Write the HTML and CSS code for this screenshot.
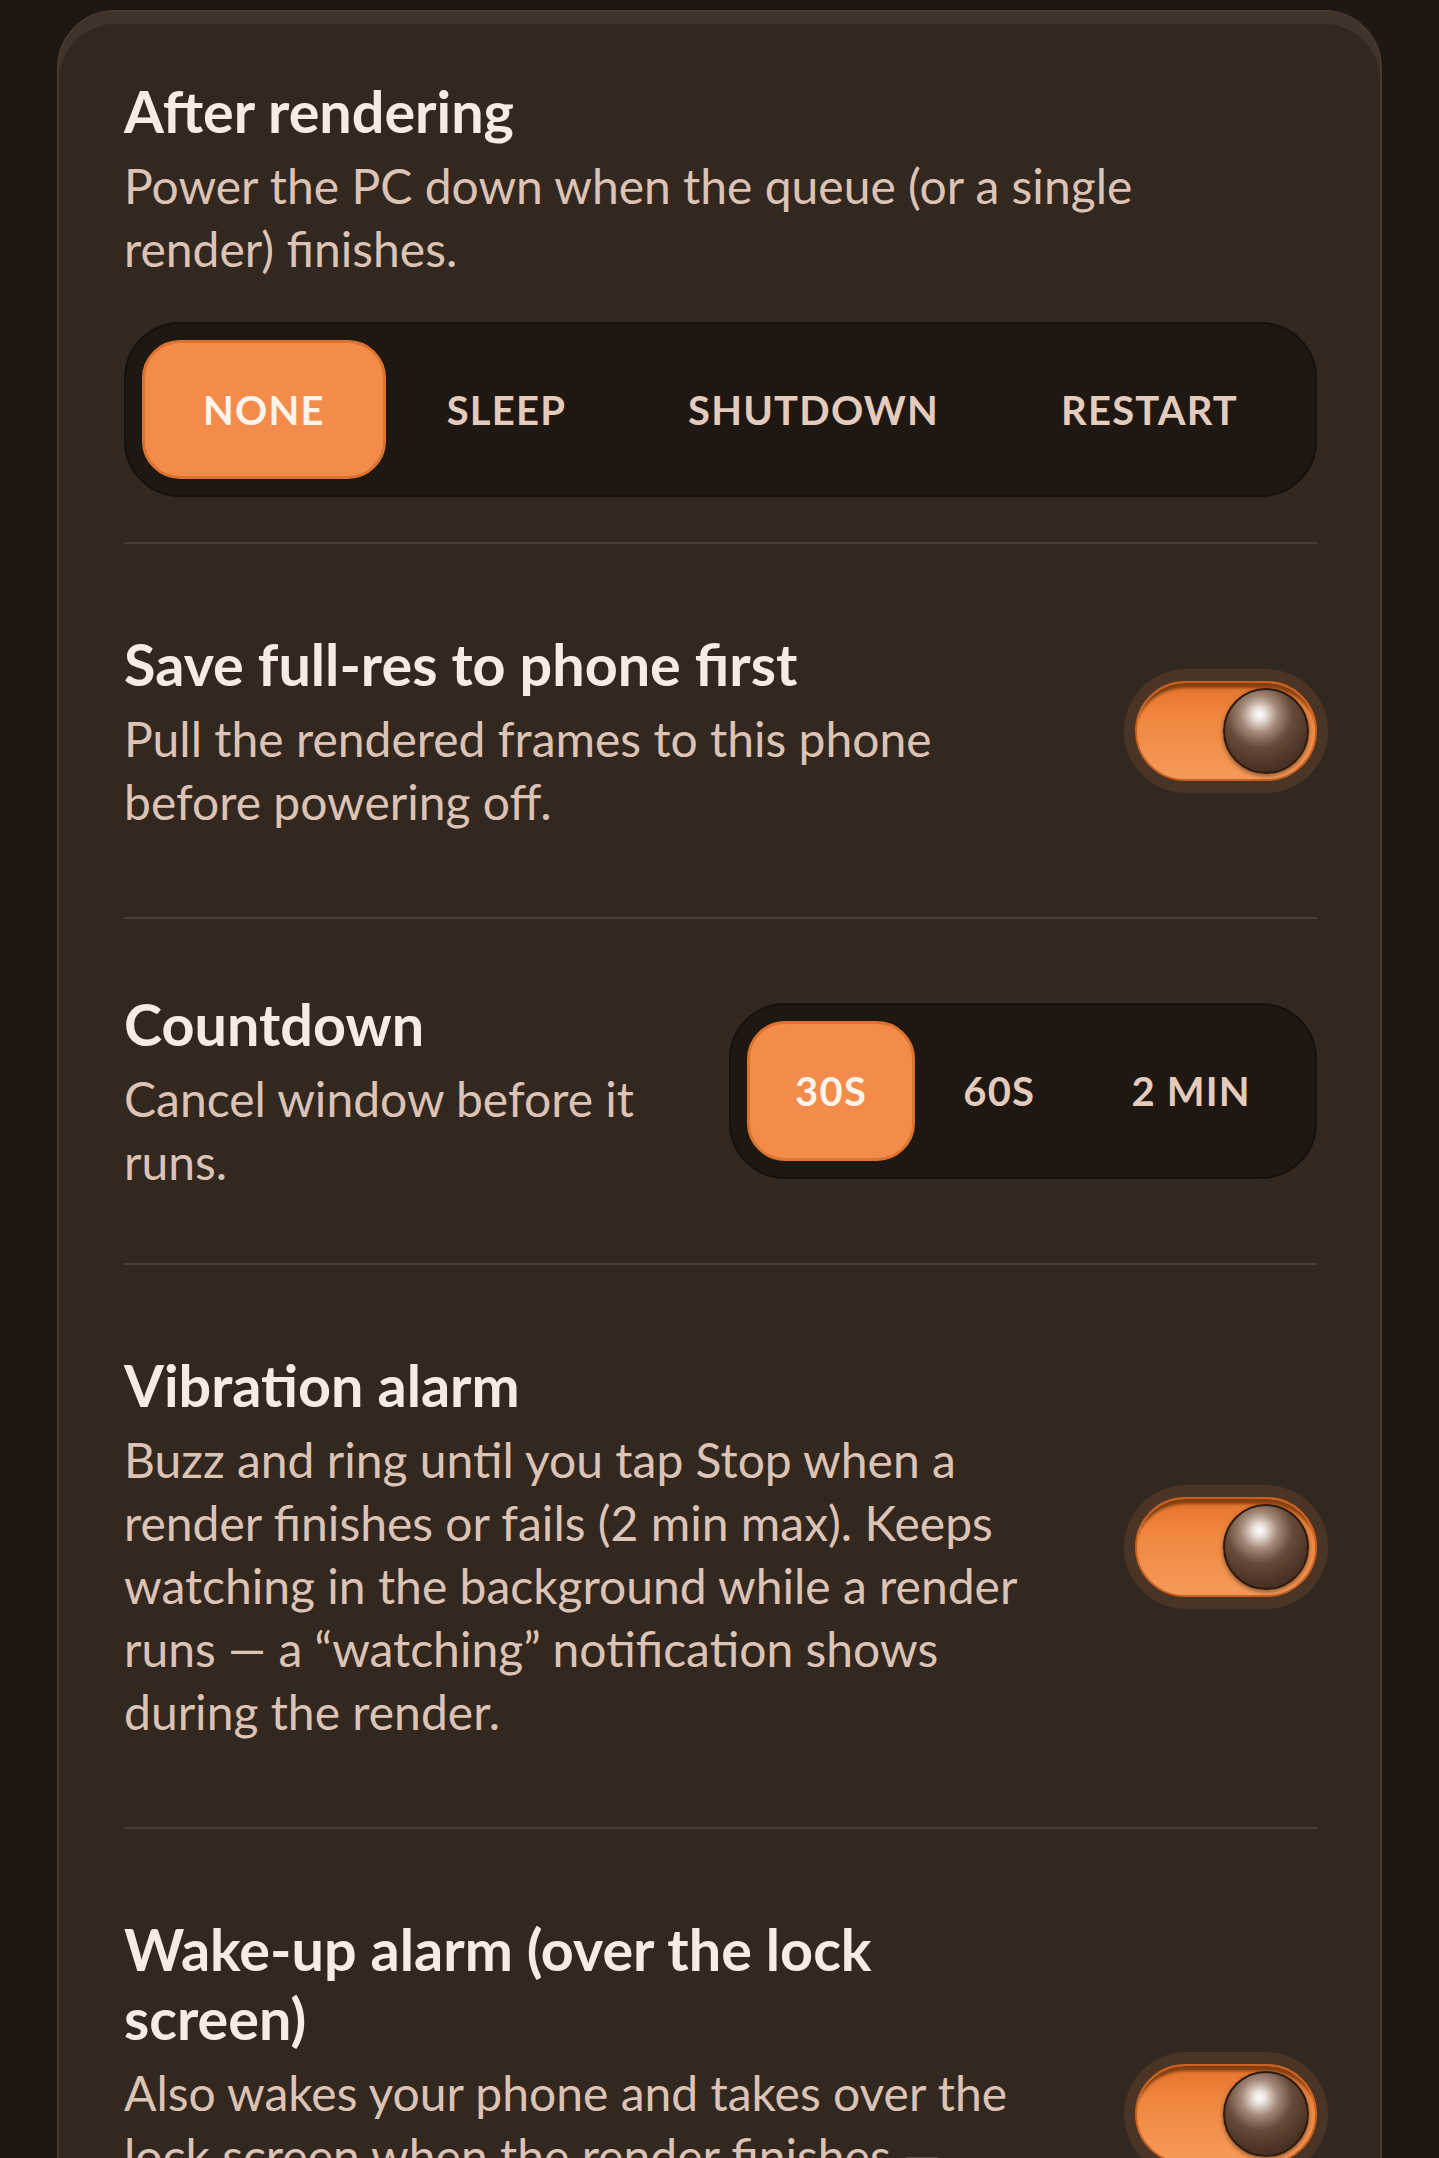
FILE: index.html
```html
<!DOCTYPE html>
<html lang="en">
<head>
<meta charset="utf-8">
<title>Render settings</title>
<link rel="stylesheet" href="styles.css">
</head>
<body>
<div class="card">
  <section class="row row-first">
    <h2 class="title">After rendering</h2>
    <p class="desc">Power the PC down when the queue (or a single render) finishes.</p>
    <div class="seg seg-wide">
      <div class="seg-item active">NONE</div>
      <div class="seg-item">SLEEP</div>
      <div class="seg-item">SHUTDOWN</div>
      <div class="seg-item">RESTART</div>
    </div>
  </section>
  <div class="divider"></div>

  <section class="row row-toggle">
    <div class="text">
      <h2 class="title">Save full-res to phone first</h2>
      <p class="desc">Pull the rendered frames to this phone before powering off.</p>
    </div>
    <div class="switch"><div class="track"><span class="knob"></span></div></div>
  </section>
  <div class="divider"></div>

  <section class="row row-seg">
    <div class="text">
      <h2 class="title">Countdown</h2>
      <p class="desc">Cancel window before it runs.</p>
    </div>
    <div class="seg seg-small">
      <div class="seg-item active">30S</div>
      <div class="seg-item">60S</div>
      <div class="seg-item">2 MIN</div>
    </div>
  </section>
  <div class="divider"></div>

  <section class="row row-toggle">
    <div class="text">
      <h2 class="title">Vibration alarm</h2>
      <p class="desc">Buzz and ring until you tap Stop when a render finishes or fails (2 min max). Keeps watching in the background while a render runs — a “watching” notification shows during the render.</p>
    </div>
    <div class="switch"><div class="track"><span class="knob"></span></div></div>
  </section>
  <div class="divider"></div>

  <section class="row row-toggle">
    <div class="text">
      <h2 class="title">Wake-up alarm (over the lock screen)</h2>
      <p class="desc">Also wakes your phone and takes over the lock screen when the render finishes — showing big Stop and Snooze buttons, even when the screen is off.</p>
    </div>
    <div class="switch"><div class="track"><span class="knob"></span></div></div>
  </section>
</div>
</body>
</html>
```

FILE: styles.css
```css
* { box-sizing: border-box; }

html, body {
  margin: 0;
  padding: 0;
  background: #1f1712;
  font-family: Lato, "Noto Sans", "DejaVu Sans", sans-serif;
}

.card {
  margin: 10px 57px 0;
  padding: 0 63px 0 65px;
  background: #33281f;
  border: 2px solid #463a32;
  border-radius: 58px;
  box-shadow: inset 0 12px 0 0 rgba(255, 235, 220, 0.06);
}

.row { margin: 0; }

.row-first { padding: 64px 0 45px; }

.row-first .desc { max-width: 1040px; }

.row-toggle {
  display: flex;
  align-items: center;
  gap: 70px;
  padding: 85px 0 84px;
}

.row-seg {
  display: flex;
  align-items: center;
  gap: 40px;
  padding: 70px 0 70px;
}

.text { flex: 1 1 auto; min-width: 0; }

.title {
  margin: 0;
  font-size: 57.5px;
  line-height: 69px;
  font-weight: 700;
  color: #f8ebe3;
}

.desc {
  margin: 9px 0 0;
  font-size: 48px;
  line-height: 63px;
  font-weight: 400;
  color: #dcc3b5;
}

.divider {
  height: 2px;
  background: #4a3d34;
}

/* segmented control */
.seg {
  display: flex;
  align-items: stretch;
  background: #1f1712;
  border: 2px solid #16100c;
  padding: 16px;
}

.seg-wide {
  margin-top: 42px;
  height: 175px;
  border-radius: 56px;
}

.seg-small {
  flex: 0 0 588px;
  height: 176px;
  border-radius: 56px;
}

.seg-item {
  flex: 1 1 auto;
  display: flex;
  align-items: center;
  justify-content: center;
  font-size: 40px;
  font-weight: 700;
  letter-spacing: 1.2px;
  color: #e3cbbd;
  border-radius: 38px;
  border: 3px solid transparent;
}

.seg-item.active {
  background: #f38b4b;
  border-color: #dc742f;
  color: #fff3ea;
}

/* toggle switch */
.switch {
  flex: 0 0 auto;
  padding: 12px 11px;
  margin-right: -11px;
  border-radius: 62px;
  background: #4a3426;
}

.track {
  width: 182px;
  height: 100px;
  border-radius: 50px;
  display: flex;
  align-items: center;
  justify-content: flex-end;
  padding-right: 6px;
  background: linear-gradient(180deg, #e4732b 0%, #f0863f 35%, #f59a5a 100%);
  border: 2px solid #c9621f;
  box-shadow: inset 0 9px 3px -4px rgba(95, 45, 10, 0.75);
}

.knob {
  width: 86px;
  height: 86px;
  border-radius: 50%;
  background: radial-gradient(circle at 42% 30%, #ffffff 0%, #ece3dd 8%, #a68b7c 24%, #674a3a 44%, #4b3225 72%, #3c271b 100%);
  border: 2px solid #2b1b11;
  box-shadow: 0 2px 4px rgba(40, 15, 0, 0.5);
}
```
